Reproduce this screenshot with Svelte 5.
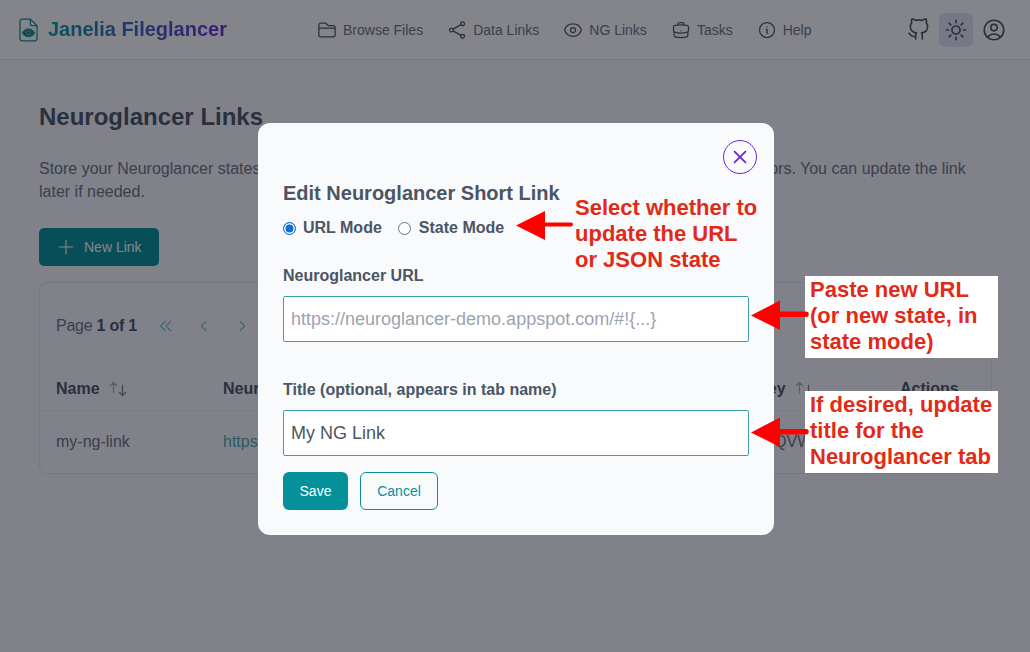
<script>
  const nav = [
    { label: "Browse Files", paths: ["M2.25 12.75V12A2.25 2.25 0 0 1 4.5 9.75h15A2.25 2.25 0 0 1 21.75 12v.75m-8.69-6.44-2.12-2.12a1.5 1.5 0 0 0-1.061-.44H4.5A2.25 2.25 0 0 0 2.25 6v12a2.25 2.25 0 0 0 2.25 2.25h15A2.25 2.25 0 0 0 21.75 18V9a2.25 2.25 0 0 0-2.25-2.25h-5.379a1.5 1.5 0 0 1-1.06-.44Z"] },
    { label: "Data Links", paths: ["M7.217 10.907a2.25 2.25 0 1 0 0 2.186m0-2.186c.18.324.283.696.283 1.093s-.103.77-.283 1.093m0-2.186 9.566-5.314m-9.566 7.5 9.566 5.314m0 0a2.25 2.25 0 1 0 3.935 2.186 2.25 2.25 0 0 0-3.935-2.186Zm0-12.814a2.25 2.25 0 1 0 3.933-2.185 2.25 2.25 0 0 0-3.933 2.185Z"] },
    { label: "NG Links", paths: ["M2.036 12.322a1.012 1.012 0 0 1 0-.639C3.423 7.51 7.36 4.5 12 4.5c4.638 0 8.573 3.007 9.963 7.178.07.207.07.431 0 .639C20.577 16.49 16.64 19.5 12 19.5c-4.638 0-8.573-3.007-9.963-7.178Z", "M15 12a3 3 0 1 1-6 0 3 3 0 0 1 6 0Z"] },
    { label: "Tasks", paths: ["M20.25 14.15v4.25c0 1.094-.787 2.036-1.872 2.18-2.087.277-4.216.42-6.378.42s-4.291-.143-6.378-.42c-1.085-.144-1.872-1.086-1.872-2.18v-4.25m16.5 0a2.18 2.18 0 0 0 .75-1.661V8.706c0-1.081-.768-2.015-1.837-2.175a48.114 48.114 0 0 0-3.413-.387m4.5 8.006c-.194.165-.42.295-.673.38A23.978 23.978 0 0 1 12 15.75c-2.648 0-5.195-.429-7.577-1.22a2.016 2.016 0 0 1-.673-.38m0 0A2.18 2.18 0 0 1 3 12.489V8.706c0-1.081.768-2.015 1.837-2.175a48.111 48.111 0 0 1 3.413-.387m7.5 0V5.25A2.25 2.25 0 0 0 13.5 3h-3a2.25 2.25 0 0 0-2.25 2.25v.894m7.5 0a48.667 48.667 0 0 0-7.5 0M12 12.75h.008v.008H12v-.008Z"] },
    { label: "Help", paths: ["m11.25 11.25.041-.02a.75.75 0 0 1 1.063.852l-.708 2.836a.75.75 0 0 0 1.063.853l.041-.021M21 12a9 9 0 1 1-18 0 9 9 0 0 1 18 0Zm-9-3.75h.008v.008H12V8.25Z"] }
  ];
</script>

<div class="page">
  <header class="topbar">
    <div class="brand">
      <svg class="logo" width="19" height="24" viewBox="0 0 20 25" fill="none" stroke="currentColor" stroke-width="1.3" stroke-linejoin="round">
        <path d="M3.5 1h8.5l7 7v13.5a2.5 2.5 0 0 1-2.500 2.500h-13a2.500 2.500 0 0 1-2.500-2.500v-18a2.500 2.500 0 0 1 2.500-2.500z"/>
        <path d="M12 1v5a2 2 0 0 0 2 2h5"/>
        <path d="M3.500 15.500c2.500-5.500 10.500-5.500 13 0c-2.500 5.500-10.500 5.500-13 0z" fill="currentColor" stroke-width="1"/>
        <circle cx="10" cy="15.500" r="2.700" fill="#5aa3a3" stroke="none"/>
        <circle cx="10" cy="15.500" r="1.500" fill="currentColor" stroke="none"/>
      </svg>
      <span class="brand-name">Janelia Fileglancer</span>
    </div>
    <nav class="nav">
      {#each nav as item}
        <span class="nav-item">
          <svg width="20" height="20" viewBox="0 0 24 24" fill="none" stroke="currentColor" stroke-width="1.5" stroke-linecap="round" stroke-linejoin="round">
            {#each item.paths as d}<path {d}/>{/each}
          </svg>
          {item.label}
        </span>
      {/each}
    </nav>
    <div class="tools">
      <span class="tool">
        <svg width="23" height="23" viewBox="0 0 24 24" fill="none" stroke="currentColor" stroke-width="1.7" stroke-linecap="round" stroke-linejoin="round">
          <path d="M9 19c-5 1.500-5-2.500-7-3m14 6v-3.870a3.370 3.370 0 0 0-.94-2.610c3.140-.35 6.440-1.540 6.440-7A5.440 5.440 0 0 0 20 4.770 5.070 5.070 0 0 0 19.910 1S18.730.65 16 2.480a13.380 13.380 0 0 0-7 0C6.270.65 5.090 1 5.090 1A5.070 5.070 0 0 0 5 4.770a5.440 5.440 0 0 0-1.500 3.780c0 5.420 3.300 6.610 6.440 7A3.370 3.370 0 0 0 9 18.130V22"/>
        </svg>
      </span>
      <span class="tool active">
        <svg width="26" height="26" viewBox="0 0 24 24" fill="none" stroke="currentColor" stroke-width="1.500" stroke-linecap="round" stroke-linejoin="round">
          <path d="M12 3v2.250m6.364.386-1.591 1.591M21 12h-2.250m-.386 6.364-1.591-1.591M12 18.750V21m-4.773-4.227-1.591 1.591M5.250 12H3m4.227-4.773L5.636 5.636M15.750 12a3.750 3.750 0 1 1-7.500 0 3.750 3.750 0 0 1 7.500 0Z"/>
        </svg>
      </span>
      <span class="tool">
        <svg width="26" height="26" viewBox="0 0 24 24" fill="none" stroke="currentColor" stroke-width="1.500" stroke-linecap="round" stroke-linejoin="round">
          <path d="M17.982 18.725A7.488 7.488 0 0 0 12 15.750a7.488 7.488 0 0 0-5.982 2.975m11.963 0a9 9 0 1 0-11.963 0m11.963 0A8.966 8.966 0 0 1 12 21a8.966 8.966 0 0 1-5.982-2.275M15 9.750a3 3 0 1 1-6 0 3 3 0 0 1 6 0Z"/>
        </svg>
      </span>
    </div>
  </header>

  <main class="content">
    <h1>Neuroglancer Links</h1>
    <p class="intro">Store your Neuroglancer states for easy sharing. Create a short link and share it with internal collaborators. You can update the link later if needed.</p>
    <button class="new-link">
      <svg width="18" height="18" viewBox="0 0 24 24" fill="none" stroke="currentColor" stroke-width="1.500" stroke-linecap="round"><path d="M12 3v18M3 12h18"/></svg>
      New Link
    </button>

    <section class="card">
      <div class="pager">
        <span class="page-count">Page <b>1 of 1</b></span>
        <span class="chev">
          <svg width="16" height="16" viewBox="0 0 24 24" fill="none" stroke="currentColor" stroke-width="2" stroke-linecap="round" stroke-linejoin="round"><path d="M11 5l-7 7 7 7M19 5l-7 7 7 7"/></svg>
        </span>
        <span class="chev">
          <svg width="16" height="16" viewBox="0 0 24 24" fill="none" stroke="currentColor" stroke-width="2" stroke-linecap="round" stroke-linejoin="round"><path d="M15 5l-7 7 7 7"/></svg>
        </span>
        <span class="chev">
          <svg width="16" height="16" viewBox="0 0 24 24" fill="none" stroke="currentColor" stroke-width="2" stroke-linecap="round" stroke-linejoin="round"><path d="M9 5l7 7-7 7"/></svg>
        </span>
      </div>
      <div class="row head">
        <span class="sortable">Name
          <svg class="sort" width="18" height="16" viewBox="0 0 18 16" fill="none" stroke-width="1.200" stroke-linecap="round" stroke-linejoin="round"><path class="up" d="M4.500 12V1.500M1.500 4.500l3-3 3 3"/><path class="down" d="M13.500 4v10.500M10.500 11.500l3 3 3-3"/></svg>
        </span>
        <span>Neuroglancer Link</span>
        <span class="sortable">Short Key
          <svg class="sort" width="18" height="16" viewBox="0 0 18 16" fill="none" stroke-width="1.200" stroke-linecap="round" stroke-linejoin="round"><path class="up" d="M4.500 12V1.500M1.500 4.500l3-3 3 3"/><path class="down" d="M13.500 4v10.500M10.500 11.500l3 3 3-3"/></svg>
        </span>
        <span>Actions</span>
      </div>
      <div class="row body">
        <span>my-ng-link</span>
        <span class="link">https://neuroglancer-demo.appspot.com</span>
        <span>aB3xTd3QVW</span>
        <span></span>
      </div>
    </section>
  </main>

  <div class="overlay"></div>

  <div class="modal">
    <button class="close" aria-label="Close">
      <svg width="20" height="20" viewBox="0 0 24 24" fill="none" stroke="currentColor" stroke-width="2.200" stroke-linecap="round"><path d="M5.500 5.500l13 13M18.500 5.500l-13 13"/></svg>
    </button>
    <h2>Edit Neuroglancer Short Link</h2>
    <div class="modes">
      <label><span class="radio on"></span>URL Mode</label>
      <label><span class="radio"></span>State Mode</label>
    </div>
    <div class="field">
      <span class="field-label">Neuroglancer URL</span>
      <div class="input placeholder">https://neuroglancer-demo.appspot.com/#!&#123;...&#125;</div>
    </div>
    <div class="field">
      <span class="field-label">Title (optional, appears in tab name)</span>
      <div class="input value">My NG Link</div>
    </div>
    <div class="actions">
      <button class="save">Save</button>
      <button class="cancel">Cancel</button>
    </div>
  </div>

  <div class="note plain n1">Select whether to<br/>update the URL<br/>or JSON state</div>
  <div class="note n2">Paste new URL<br/>(or new state, in<br/>state mode)</div>
  <div class="note n3">If desired, update<br/>title for the<br/>Neuroglancer tab</div>

  <svg class="arrows" width="1030" height="652" viewBox="0 0 1030 652">
    <path d="M516 225.500l29-14.500v11.500h26a2 2 0 0 1 0 4h-26v13.500z"/>
    <path d="M751 315.500l29-15v11h26a2.500 2.500 0 0 1 0 5.500h-26v13z"/>
    <path d="M751 432.500l29-15v11.500h26a2.500 2.500 0 0 1 0 5.500h-26v12.500z"/>
  </svg>
</div>

<style>
  :global(body) {
    margin: 0;
    font-family: "Liberation Sans", Arial, sans-serif;
  }

  .page {
    position: relative;
    width: 1030px;
    height: 652px;
    overflow: hidden;
    background: #f8f9fb;
    color: #4b5563;
  }

  .topbar {
    display: flex;
    align-items: center;
    height: 60px;
    box-sizing: border-box;
    padding: 0 19px 0 19px;
    background: #fff;
    border-bottom: 1px solid #e2e5ea;
  }

  .brand {
    display: flex;
    align-items: center;
    gap: 10px;
    width: 298px;
    flex-shrink: 0;
  }

  .logo {
    color: #0a8f8c;
  }

  .brand-name {
    font-size: 20px;
    font-weight: 700;
    white-space: nowrap;
    background: linear-gradient(90deg, #0a9aa0, #6d28d9);
    -webkit-background-clip: text;
    background-clip: text;
    color: transparent;
  }

  .nav {
    display: flex;
    align-items: center;
    gap: 24px;
    flex: 1;
    font-size: 14px;
    color: #6b7280;
  }

  .nav-item {
    display: flex;
    align-items: center;
    gap: 6px;
    white-space: nowrap;
  }

  .nav-item svg {
    color: #4b5563;
  }

  .tools {
    display: flex;
    align-items: center;
    color: #4b5563;
  }

  .tool {
    display: flex;
    align-items: center;
    justify-content: center;
    width: 34px;
    height: 34px;
    margin-left: 4px;
    border-radius: 6px;
  }

  .tool.active {
    background: #e3e7f3;
  }

  .content {
    padding: 43px 38px 0 39px;
  }

  h1 {
    margin: 0;
    font-size: 24px;
    line-height: 28px;
    font-weight: 700;
    color: #4b5563;
  }

  .intro {
    margin: 26px 0 0;
    font-size: 16px;
    line-height: 23px;
    color: #6b7280;
  }

  .new-link {
    display: flex;
    align-items: center;
    gap: 9px;
    width: 120px;
    height: 38px;
    margin-top: 25px;
    padding: 0 0 0 18px;
    border: 0;
    border-radius: 5px;
    background: #05919a;
    color: #fff;
    font: inherit;
    font-size: 14px;
  }

  .card {
    width: 953px;
    box-sizing: border-box;
    height: 192px;
    margin-top: 16px;
    border: 1px solid #e1e4ea;
    border-radius: 8px;
  }

  .pager {
    display: flex;
    align-items: center;
    height: 85px;
    padding-left: 16px;
    font-size: 16px;
    color: #6b7280;
  }

  .pager b {
    color: #4b5563;
  }

  .chev {
    display: flex;
    color: #7cc8c4;
    width: 38px;
  }

  .page-count {
    width: 102px;
    white-space: nowrap;
    letter-spacing: -0.25px;
  }

  .row {
    display: grid;
    grid-template-columns: 167px 487px 190px 90px;
    align-items: center;
    padding-left: 16px;
    font-size: 16px;
    white-space: nowrap;
    overflow: hidden;
    color: #6b7280;
  }

  .head {
    height: 42px;
    font-weight: 700;
    color: #4b5563;
    border-bottom: 1px solid #eceef1;
  }

  .body {
    height: 62px;
  }

  .sortable {
    display: flex;
    align-items: center;
    gap: 9px;
  }

  .sort .up {
    stroke: #a9aeb7;
  }

  .sort .down {
    stroke: #7d838e;
  }

  .link {
    color: #4aa8a4;
  }

  .overlay {
    position: absolute;
    inset: 0;
    background: rgba(10, 12, 24, 0.5);
  }

  .modal {
    position: absolute;
    left: 258px;
    top: 123px;
    width: 516px;
    height: 412px;
    box-sizing: border-box;
    padding: 58px 25px 0;
    background: #f8fafc;
    border-radius: 12px;
    color: #4b5563;
  }

  .close {
    position: absolute;
    top: 17px;
    right: 17px;
    display: flex;
    align-items: center;
    justify-content: center;
    width: 34px;
    height: 34px;
    padding: 0;
    background: transparent;
    border: 1px solid #6d28d9;
    border-radius: 50%;
    color: #6d28d9;
  }

  h2 {
    margin: 0;
    font-size: 20px;
    line-height: 24px;
    font-weight: 700;
  }

  .modes {
    display: flex;
    gap: 16px;
    margin-top: 13px;
    font-size: 16px;
    font-weight: 700;
    line-height: 20px;
  }

  .modes label {
    display: flex;
    align-items: center;
    gap: 7px;
  }

  .modes label + label {
    gap: 8px;
  }

  .radio {
    width: 13px;
    height: 13px;
    box-sizing: border-box;
    border: 1px solid #6b7280;
    border-radius: 50%;
    background: #fff;
  }

  .radio.on {
    border: 1.500px solid #0b6fe0;
    box-shadow: inset 0 0 0 1.500px #fff;
    background: #0b6fe0;
  }

  .field {
    display: flex;
    flex-direction: column;
    gap: 11px;
  }

  .modes + .field {
    margin-top: 29px;
  }

  .field + .field {
    margin-top: 39px;
  }

  .field-label {
    font-size: 16px;
    font-weight: 700;
    line-height: 18px;
  }

  .input {
    display: flex;
    align-items: center;
    height: 46px;
    box-sizing: border-box;
    padding: 0 7px;
    background: #fff;
    border: 1px solid #3d9fa8;
    border-radius: 2px;
    white-space: nowrap;
    font-size: 18px;
  }

  .placeholder {
    color: #9ca3af;
  }

  .value {
    color: #4b5563;
  }

  .actions {
    display: flex;
    gap: 12px;
    margin-top: 16px;
  }

  .actions button {
    height: 38px;
    border-radius: 6px;
    font: inherit;
    font-size: 14px;
  }

  .save {
    width: 65px;
    border: 0;
    background: #05919a;
    color: #fff;
    font-weight: 700;
  }

  .cancel {
    width: 78px;
    border: 1px solid #05919a;
    background: transparent;
    color: #05919a;
  }

  .note {
    position: absolute;
    box-sizing: border-box;
    padding: 1px 5px;
    font-size: 22px;
    line-height: 26px;
    font-weight: 700;
    color: #e12a18;
    background: #fff;
    white-space: nowrap;
  }

  .note.plain {
    background: transparent;
  }

  .n1 {
    left: 570px;
    top: 194px;
  }

  .n2 {
    left: 805px;
    top: 276px;
    width: 193px;
    height: 82px;
  }

  .n3 {
    left: 805px;
    top: 391px;
    width: 193px;
    height: 82px;
  }

  .arrows {
    position: absolute;
    left: 0;
    top: 0;
    fill: #ff0000;
    pointer-events: none;
  }
</style>
